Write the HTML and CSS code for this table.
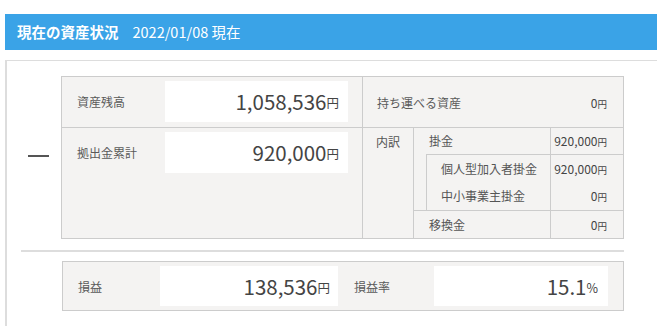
FILE: index.html
```html
<!DOCTYPE html>
<html lang="ja">
<head>
  <meta charset="UTF-8" />
  <meta name="viewport" content="width=device-width, initial-scale=1.0" />
  <title>資産状況</title>
  <link rel="stylesheet" href="styles.css">
</head>
<body>
  <div class="page">
    <h2 class="title-bar">
      <span class="title">現在の資産状況</span>
      <span class="date">2022/01/08 現在</span>
    </h2>

    <div class="panel">
      <div class="assets">
        <div class="dash"></div>
        <div class="summary">
          <div class="cell main-row top">
            <span class="label">資産残高</span>
            <div class="value-box">1,058,536<small>円</small></div>
          </div>
          <div class="cell side-row top">
            <span class="label">持ち運べる資産</span>
            <span class="amount">0<small>円</small></span>
          </div>
          <div class="cell main-row">
            <span class="label">拠出金累計</span>
            <div class="value-box">920,000<small>円</small></div>
          </div>
          <div class="cell breakdown">
            <div class="breakdown-title">内訳</div>
            <div class="breakdown-list">
              <div class="line">
                <span class="line-label">掛金</span>
                <span class="line-value">920,000<small>円</small></span>
              </div>
              <div class="nested">
                <div class="line">
                  <span class="line-label">個人型加入者掛金</span>
                  <span class="line-value">920,000<small>円</small></span>
                </div>
                <div class="line">
                  <span class="line-label">中小事業主掛金</span>
                  <span class="line-value">0<small>円</small></span>
                </div>
              </div>
              <div class="line last">
                <span class="line-label">移換金</span>
                <span class="line-value">0<small>円</small></span>
              </div>
            </div>
          </div>
        </div>
      </div>

      <hr class="divider">

      <div class="profit">
        <span class="label profit-label">損益</span>
        <div class="value-box profit-box">138,536<small>円</small></div>
        <span class="label rate-label">損益率</span>
        <div class="value-box rate-box">15.1<small>%</small></div>
      </div>
    </div>
  </div>
</body>
</html>
```

FILE: styles.css
```css
body {
  margin: 0;
  font-family: 'Noto Sans CJK JP', sans-serif;
  color: #555;
  background: #fff;
}
.page {
  padding: 14px 0 0 5px;
}

/* header bar */
.title-bar {
  margin: 0;
  height: 36px;
  display: flex;
  align-items: center;
  padding-left: 12px;
  background: #3aa3e7;
  color: #fff;
  font-size: 14.5px;
  font-weight: normal;
  line-height: 1;
}
.title {
  font-weight: bold;
  margin-right: 14px;
}
.date {
  font-size: 14.5px;
}

/* outer panel */
.panel {
  margin-top: 10px;
  border-top: 1px solid #ddd;
  border-left: 2px solid #ddd;
  padding: 15px 33px 20px 0;
}
.assets {
  display: flex;
  align-items: center;
}
.dash {
  width: 21px;
  height: 2px;
  background: #555;
  margin: 0 12px 4px 21px;
}

/* balance table */
.summary {
  flex: 1;
  display: grid;
  grid-template-columns: 300px 1fr;
  border: 1px solid #ccc;
  background: #f4f3f2;
}
.cell.top {
  border-bottom: 1px solid #ccc;
}
.main-row {
  display: flex;
  align-items: flex-start;
  padding: 4px 14px 5px 15px;
}
.main-row .label {
  width: 88px;
  line-height: 41px;
}
.label {
  font-size: 12px;
  color: #5a5a5a;
}
.value-box {
  flex: 1;
  height: 41px;
  background: #fff;
  display: flex;
  align-items: center;
  justify-content: flex-end;
  padding-right: 9px;
  font-size: 20.5px;
  line-height: 1;
  color: #444;
}
.value-box small {
  font-size: 12.5px;
  margin-top: 4px;
}
.side-row {
  border-left: 1px solid #ccc;
  display: flex;
  align-items: center;
  justify-content: space-between;
  padding: 0 16px 0 14px;
}
.amount {
  font-size: 12px;
  color: #444;
}
small {
  font-size: 9.5px;
}

/* breakdown of contributions */
.breakdown {
  border-left: 1px solid #ccc;
  display: flex;
}
.breakdown-title {
  width: 50px;
  border-right: 1px solid #ccc;
  font-size: 12px;
  text-align: center;
  line-height: 27px;
}
.breakdown-list {
  flex: 1;
}
.line {
  display: flex;
  height: 26px;
}
.line-label {
  flex: 1;
  font-size: 12px;
  line-height: 26px;
  padding-left: 15px;
}
.line-value {
  width: 73px;
  box-sizing: border-box;
  border-left: 1px solid #ccc;
  text-align: right;
  padding-right: 16px;
  font-size: 12px;
  line-height: 26px;
  color: #444;
}
.nested {
  margin-left: 12px;
  border-top: 1px solid #ccc;
  border-left: 1px solid #ccc;
}
.nested .line {
  height: 27px;
}
.nested .line + .line {
  height: 28px;
}
.nested .line-label {
  padding-left: 14px;
  line-height: 27px;
}
.nested .line-value {
  line-height: 27px;
}
.line.last {
  border-top: 1px solid #ccc;
  height: 27px;
}
.line.last .line-label,
.line.last .line-value {
  line-height: 27px;
}

/* profit row */
.divider {
  margin: 11px 0 9px 14px;
  height: 2px;
  border: 0;
  background: #ddd;
}
.profit {
  margin-left: 55px;
  display: flex;
  align-items: center;
  padding: 4px 15px 4px 15px;
  border: 1px solid #ccc;
  background: #f4f3f2;
}
.profit .value-box {
  height: 40px;
}
.profit-label {
  width: 82px;
}
.profit-box {
  flex: 0 0 170px;
  padding-right: 8px;
}
.rate-label {
  width: 80px;
  padding-left: 16px;
}
.rate-box {
  padding-right: 10px;
}
```
